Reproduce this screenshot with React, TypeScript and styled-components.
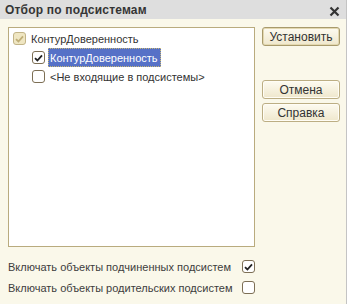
import React, { useState } from 'react';
import styled, { createGlobalStyle, css } from 'styled-components';

const GlobalStyle = createGlobalStyle`
  html, body {
    margin: 0;
    padding: 0;
    background: #faf8ea;
  }
  * {
    box-sizing: border-box;
  }
`;

const Window = styled.div`
  width: 347px;
  height: 304px;
  display: flex;
  flex-direction: column;
  background: #faf8ea;
  font-family: 'Liberation Sans', Arial, sans-serif;
  font-size: 11px;
  color: #333;
  border-right: 1px solid #c4c4c4;
  overflow: hidden;
`;

const TitleBar = styled.div`
  height: 19px;
  flex: none;
  display: flex;
  align-items: center;
  justify-content: space-between;
  padding: 0 6px 0 5px;
  background: #dedede;
`;

const Title = styled.div`
  font-weight: bold;
  font-size: 12px;
  color: #353535;
  letter-spacing: 0.2px;
  padding-top: 1px;
`;

const CloseButton = styled.div`
  width: 11px;
  height: 11px;
  display: flex;
  margin-top: 3px;
`;

const Body = styled.div`
  flex: 1;
  display: grid;
  grid-template-columns: 247px 78px;
  column-gap: 7px;
  padding: 8px 0 0 8px;
`;

const LeftColumn = styled.div`
  display: flex;
  flex-direction: column;
`;

const TreePanel = styled.div`
  height: 220px;
  background: #fff;
  border: 1px solid #b9ab7e;
  padding-top: 1px;
`;

const TreeRow = styled.div<{ $level: number }>`
  height: 19px;
  display: flex;
  align-items: center;
  padding-left: ${p => 4 + p.$level * 19}px;
`;

const RowLabel = styled.span<{ $selected?: boolean }>`
  height: 19px;
  display: flex;
  align-items: center;
  margin-left: 3px;
  padding: 0 3px 0 2px;
  white-space: nowrap;
  ${p =>
    p.$selected &&
    css`
      background: #5671c7;
      color: #fff;
      outline: 1px dotted #c9b874;
      outline-offset: -1px;
    `}
`;

const Box = styled.span<{ $disabled?: boolean }>`
  width: 13px;
  height: 13px;
  flex: none;
  display: flex;
  align-items: center;
  justify-content: center;
  border-radius: 3px;
  border: 1px solid ${p => (p.$disabled ? '#c2b488' : '#7d6f55')};
  background: ${p => (p.$disabled ? '#efe6c2' : '#fff')};
`;

const Options = styled.div`
  display: flex;
  flex-direction: column;
  padding-top: 9px;
`;

const OptionRow = styled.label`
  height: 21px;
  display: flex;
  align-items: center;
  justify-content: space-between;
  color: #3d3d3d;
`;

const ButtonColumn = styled.div`
  display: flex;
  flex-direction: column;
`;

const Button = styled.button<{ $gapBefore?: number }>`
  height: 19px;
  margin-top: ${p => p.$gapBefore ?? 0}px;
  padding: 0;
  font-family: 'Liberation Sans', Arial, sans-serif;
  font-size: 12px;
  color: #333;
  border: 1px solid #bcae84;
  border-radius: 3px;
  background: linear-gradient(#fdfbf1, #efe7cc);
  box-shadow: inset 0 0 0 1px #fffdf5;
  cursor: pointer;
`;

const DefaultButton = styled(Button)`
  border-color: #a89a6c;
  box-shadow: inset 0 0 0 1px #e3d8b0;
`;

function CheckMark({ color }: { color: string }) {
  return (
    <svg width="9" height="8" viewBox="0 0 9 8">
      <path
        d="M1 4.2 L3.4 6.5 L8 1.3"
        fill="none"
        stroke={color}
        strokeWidth="1.8"
      />
    </svg>
  );
}

function CheckBox({ checked, disabled }: { checked: boolean; disabled?: boolean }) {
  return (
    <Box $disabled={disabled}>
      {checked && <CheckMark color={disabled ? '#bfae78' : '#222'} />}
    </Box>
  );
}

export default function App() {
  const [includeChildren, setIncludeChildren] = useState(true);
  const [includeParents, setIncludeParents] = useState(false);

  return (
    <>
      <GlobalStyle />
      <Window>
        <TitleBar>
          <Title>Отбор по подсистемам</Title>
          <CloseButton>
            <svg width="11" height="11" viewBox="0 0 11 11">
              <path d="M1.5 1.5 L9.5 9.5 M9.5 1.5 L1.5 9.5" stroke="#333" strokeWidth="2.2" />
            </svg>
          </CloseButton>
        </TitleBar>
        <Body>
          <LeftColumn>
            <TreePanel>
              <TreeRow $level={0}>
                <CheckBox checked disabled />
                <RowLabel>КонтурДоверенность</RowLabel>
              </TreeRow>
              <TreeRow $level={1}>
                <CheckBox checked />
                <RowLabel $selected>КонтурДоверенность</RowLabel>
              </TreeRow>
              <TreeRow $level={1}>
                <CheckBox checked={false} />
                <RowLabel>&lt;Не входящие в подсистемы&gt;</RowLabel>
              </TreeRow>
            </TreePanel>
            <Options>
              <OptionRow onClick={() => setIncludeChildren(v => !v)}>
                <span>Включать объекты подчиненных подсистем</span>
                <CheckBox checked={includeChildren} />
              </OptionRow>
              <OptionRow onClick={() => setIncludeParents(v => !v)}>
                <span>Включать объекты родительских подсистем</span>
                <CheckBox checked={includeParents} />
              </OptionRow>
            </Options>
          </LeftColumn>
          <ButtonColumn>
            <DefaultButton>Установить</DefaultButton>
            <Button $gapBefore={34}>Отмена</Button>
            <Button $gapBefore={4}>Справка</Button>
          </ButtonColumn>
        </Body>
      </Window>
    </>
  );
}
